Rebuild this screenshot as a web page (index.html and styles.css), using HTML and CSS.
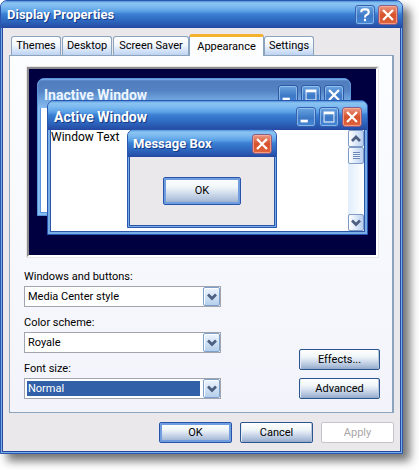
FILE: index.html
```html
<!DOCTYPE html>
<html lang="en">
<head>
<meta charset="utf-8">
<meta name="viewport" content="width=device-width, initial-scale=1">
<title>Display Properties</title>
<link rel="stylesheet" href="styles.css">
</head>
<body>
<svg class="defs" aria-hidden="true">
  <symbol id="i-close" viewBox="0 0 20 20"><path d="M4.5 4.5L15.5 15.5M15.5 4.5L4.5 15.5" stroke="#fff" stroke-width="2.5" fill="none"/></symbol>
  <symbol id="i-help" viewBox="0 0 20 20"><path d="M6 7V6Q6 3.8 8.5 3.8H11Q14 3.8 14 6.2V7.5Q14 9 12 9.8Q10 10.5 10 12.8M10 14.3V17" stroke="#fff" stroke-width="2.4" fill="none"/></symbol>
  <symbol id="i-min" viewBox="0 0 20 20"><path d="M4 13H12V16H4Z" fill="#fff"/></symbol>
  <symbol id="i-max" viewBox="0 0 20 20"><path d="M4 4H16V16H4ZM5 7V15H15V7Z" fill="#fff" fill-rule="evenodd"/></symbol>
  <symbol id="i-down" viewBox="0 0 10 8"><path d="M1 1.5L5 5.5L9 1.5" stroke="#4d5f80" stroke-width="2.7" fill="none"/></symbol>
  <symbol id="i-up" viewBox="0 0 10 8"><path d="M1 6L5 2L9 6" stroke="#4d5f80" stroke-width="2.7" fill="none"/></symbol>
</svg>
<main class="dialog">
  <header class="titlebar">
    <h1 class="title">Display Properties</h1>
    <button class="cap" type="button" aria-label="Help"><svg><use href="#i-help"/></svg></button>
    <button class="cap cap-close" type="button" aria-label="Close"><svg><use href="#i-close"/></svg></button>
  </header>
  <div class="content">
    <div class="tabs" role="tablist">
      <button class="tab" type="button" role="tab">Themes</button>
      <button class="tab" type="button" role="tab">Desktop</button>
      <button class="tab tab-wide" type="button" role="tab">Screen Saver</button>
      <button class="tab tab-active" type="button" role="tab" aria-selected="true">Appearance</button>
      <button class="tab" type="button" role="tab">Settings</button>
    </div>
    <section class="panel">
      <div class="preview">
        <div class="win win-inactive">
          <header class="titlebar">
            <h2 class="title">Inactive Window</h2>
            <button class="cap" type="button" aria-label="Minimize"><svg><use href="#i-min"/></svg></button>
            <button class="cap" type="button" aria-label="Maximize"><svg><use href="#i-max"/></svg></button>
            <button class="cap" type="button" aria-label="Close"><svg><use href="#i-close"/></svg></button>
          </header>
          <div class="client"></div>
        </div>
        <div class="win win-active">
          <header class="titlebar">
            <h2 class="title">Active Window</h2>
            <button class="cap" type="button" aria-label="Minimize"><svg><use href="#i-min"/></svg></button>
            <button class="cap" type="button" aria-label="Maximize"><svg><use href="#i-max"/></svg></button>
            <button class="cap cap-close" type="button" aria-label="Close"><svg><use href="#i-close"/></svg></button>
          </header>
          <div class="client">
            <p class="wintext">Window Text</p>
            <div class="scrollbar">
              <button class="sb" type="button" aria-label="Scroll up"><svg class="chev"><use href="#i-up"/></svg></button>
              <div class="sb thumb"><span class="grip"></span></div>
              <button class="sb sb-end" type="button" aria-label="Scroll down"><svg class="chev"><use href="#i-down"/></svg></button>
            </div>
          </div>
        </div>
        <div class="win win-message">
          <header class="titlebar">
            <h2 class="title">Message Box</h2>
            <button class="cap cap-close" type="button" aria-label="Close"><svg><use href="#i-close"/></svg></button>
          </header>
          <div class="client"><button class="btn btn-default btn-tall" type="button">OK</button></div>
        </div>
      </div>
      <div class="settings">
        <div class="fields">
          <div class="field">
            <label for="style">Windows and buttons:</label>
            <div class="combo"><select id="style"><option>Media Center style</option></select><span class="drop"><svg class="chev"><use href="#i-down"/></svg></span></div>
          </div>
          <div class="field">
            <label for="scheme">Color scheme:</label>
            <div class="combo"><select id="scheme"><option>Royale</option></select><span class="drop"><svg class="chev"><use href="#i-down"/></svg></span></div>
          </div>
          <div class="field">
            <label for="size">Font size:</label>
            <div class="combo"><select id="size" class="selected"><option>Normal</option></select><span class="drop"><svg class="chev"><use href="#i-down"/></svg></span></div>
          </div>
        </div>
        <div class="side">
          <button class="btn" type="button">Effects...</button>
          <button class="btn" type="button">Advanced</button>
        </div>
      </div>
    </section>
    <footer class="actions">
      <button class="btn btn-default" type="button">OK</button>
      <button class="btn" type="button">Cancel</button>
      <button class="btn" type="button" disabled>Apply</button>
    </footer>
  </div>
</main>
</body>
</html>
```
FILE: styles.css
```css
* { box-sizing: border-box; }
body {
  margin: 0;
  padding: 0 16px 16px 0;
  background: #fff;
  color: #000;
  font: 11px/16px Roboto, "Liberation Sans", sans-serif;
}
button, select { font: inherit; color: inherit; margin: 0; padding: 0; }
h1, h2, p { margin: 0; }
label { display: block; }
svg { display: block; width: 100%; height: 100%; }
.defs { position: absolute; width: 0; height: 0; }

/* Window frames */
.dialog, .win {
  border: 1px solid #2b56b0;
  border-radius: 7px 7px 0 0;
  background: #78aee8;
}
.dialog {
  padding: 0 1px 1px;
  box-shadow: 7px 7px 10px rgba(0, 0, 0, .55);
}
.titlebar {
  display: flex;
  align-items: center;
  gap: 3px;
  height: 27px;
  margin: 0 -1px;
  padding: 0 4px 0 6px;
  border-radius: 6px 6px 0 0;
  background: linear-gradient(#4f93e0 0, #8cc4f0 2px, #7dbaf0 20%, #5ba1e6 38%, #3c80d3 48%, #3272c8 62%, #2c62ba 78%, #2750a9 94%, #2447a0);
}
.title {
  flex: 1;
  color: #fff;
  font-size: 13px;
  line-height: 16px;
  font-weight: 700;
  text-shadow: 1px 1px 0 #153a86;
  white-space: nowrap;
}
.cap {
  flex: none;
  width: 20px;
  height: 20px;
  border: 1px solid #3562b0;
  border-radius: 3px;
  background: linear-gradient(#6aa5e2, #3d78c6 55%, #4586d6);
  box-shadow: inset 0 0 0 1px rgba(170, 207, 244, .65);
}
.cap svg { width: 18px; height: 18px; }
.cap-close {
  border-color: #8f5c88;
  background: linear-gradient(#ec9a84, #d7512c 50%, #e0633b);
  box-shadow: inset 0 0 0 1px rgba(246, 181, 160, .7);
}

.content {
  padding: 6px 6px 8px;
  border: 1px solid #2747a0;
  border-top: 0;
  background: #ebe8ec;
}

/* Tabs */
.tabs { display: flex; align-items: flex-end; gap: 1px; padding: 0 2px; height: 21px; }
.tab {
  width: 50px;
  height: 19px;
  border: 1px solid #8ba3bd;
  border-bottom: 0;
  border-radius: 3px 3px 0 0;
  background: linear-gradient(#fff, #f1f6fd 45%, #bdd3f2);
  white-space: nowrap;
}
.tab-wide { width: 76px; }
.tab-active {
  position: relative;
  width: 75px;
  height: 22px;
  margin: 0 -1px -1px;
  border-top: 3px solid #f4b12c;
  background: #fcfdff;
}

.panel {
  padding: 11px 12px 13px 14px;
  border: 1px solid #8ba3bd;
  border-right-width: 2px;
  background: linear-gradient(#fcfdff, #f3f4fb);
}

/* Desktop preview */
.preview {
  position: relative;
  height: 190px;
  margin: 0 2px 0 3px;
  border: 2px solid;
  border-color: #8b8b8f #fff #fff #8b8b8f;
  outline: 1px solid #e9e5e9;
  background: #000040;
}
.win { position: absolute; display: flex; flex-direction: column; padding: 0 2px 2px; }
.win .titlebar { flex: none; height: 29px; margin: 0 -2px; }
.win .client { flex: 1; min-height: 0; border: 1px solid #2b56a6; border-top: 0; background: #fff; }
.win-inactive { top: 9px; left: 8px; right: 25px; height: 138px; border-color: #5a94dc; background: #86bdf0; }
.win-inactive .titlebar { padding: 2px 6px 0; background: linear-gradient(#80b4ec 0, #4f7dbd 2px, #5482c2 40%, #6a9fda 65%, #88bbee); }
.win-inactive .title { color: #edf5ff; text-shadow: none; }
.win-inactive .title, .win-active .title { font-size: 14px; }
.win-inactive .cap { border-color: #2c5aa5; }
.win-inactive .client { border-color: #5a94dc; }
.win-active { top: 31px; left: 18px; right: 8px; height: 135px; }
.win-active .titlebar { padding: 2px 5px 0 6px; }
.win-active .client { display: flex; }
.win-message { top: 60px; left: 98px; width: 150px; height: 99px; padding: 0 1px 1px; }
.win-message .titlebar { height: 27px; margin: 0 -1px; padding: 0 4px 0 5px; }
.win-message .client { display: flex; justify-content: center; align-items: flex-start; padding-top: 20px; background: #ebe8ec; }
.wintext { flex: 1; font-size: 12px; line-height: 14px; }

.scrollbar { display: flex; flex-direction: column; width: 16px; background: linear-gradient(90deg, #e0edfb, #fff); }
.sb {
  flex: none;
  display: flex;
  align-items: center;
  justify-content: center;
  width: 16px;
  height: 17px;
  border: 1px solid #7f9ac4;
  border-radius: 2px;
  background: linear-gradient(90deg, #fff, #b8cff0);
}
.sb-end { margin-top: auto; }
.grip { width: 7px; height: 7px; background: repeating-linear-gradient(#6c88b8 0 1px, #e9f1fc 1px 2px); }
.chev { width: 10px; height: 8px; }

/* Fields */
.settings { display: flex; justify-content: space-between; align-items: flex-end; padding-top: 12px; }
.fields { display: flex; flex-direction: column; gap: 8px; width: 197px; }
.combo { position: relative; height: 21px; margin-top: 1px; }
select {
  appearance: none;
  display: block;
  width: 100%;
  height: 21px;
  padding: 2px 20px 2px 2px;
  border: 1px solid #a2a5ad;
  border-radius: 0;
  background: #fff;
  text-indent: 1px;
}
select.selected { color: #fff; background: linear-gradient(#315fa8, #315fa8) content-box, #fff; }
.drop {
  position: absolute;
  top: 1px;
  right: 1px;
  display: flex;
  align-items: center;
  justify-content: center;
  width: 17px;
  height: 19px;
  border: 1px solid #7da0cb;
  border-radius: 2px;
  background: linear-gradient(#edf5fe, #b5cfeb);
  box-shadow: inset 1px 1px 0 #fff;
  pointer-events: none;
}

/* Push buttons */
.side { display: flex; flex-direction: column; gap: 8px; width: 81px; }
.btn {
  height: 21px;
  border: 1px solid #2b558e;
  border-radius: 2px;
  background: linear-gradient(#fff, #f0f6f8 35%, #d2dded 58%, #b3c4dd 80%, #93a9ca);
  box-shadow: inset 1px 0 0 #e5edf6, inset -1px 0 0 #b7c6dc;
}
.btn-default { border-color: #2855ab; box-shadow: inset 0 0 0 2px #6f9ddd; }
.btn-tall { width: 78px; height: 28px; }
.btn:disabled { border-color: #c6c4ca; background: #fff; color: #a8a6a8; box-shadow: none; }
.actions { display: flex; justify-content: flex-end; gap: 8px; padding-top: 9px; }
.actions .btn { width: 73px; }
```
